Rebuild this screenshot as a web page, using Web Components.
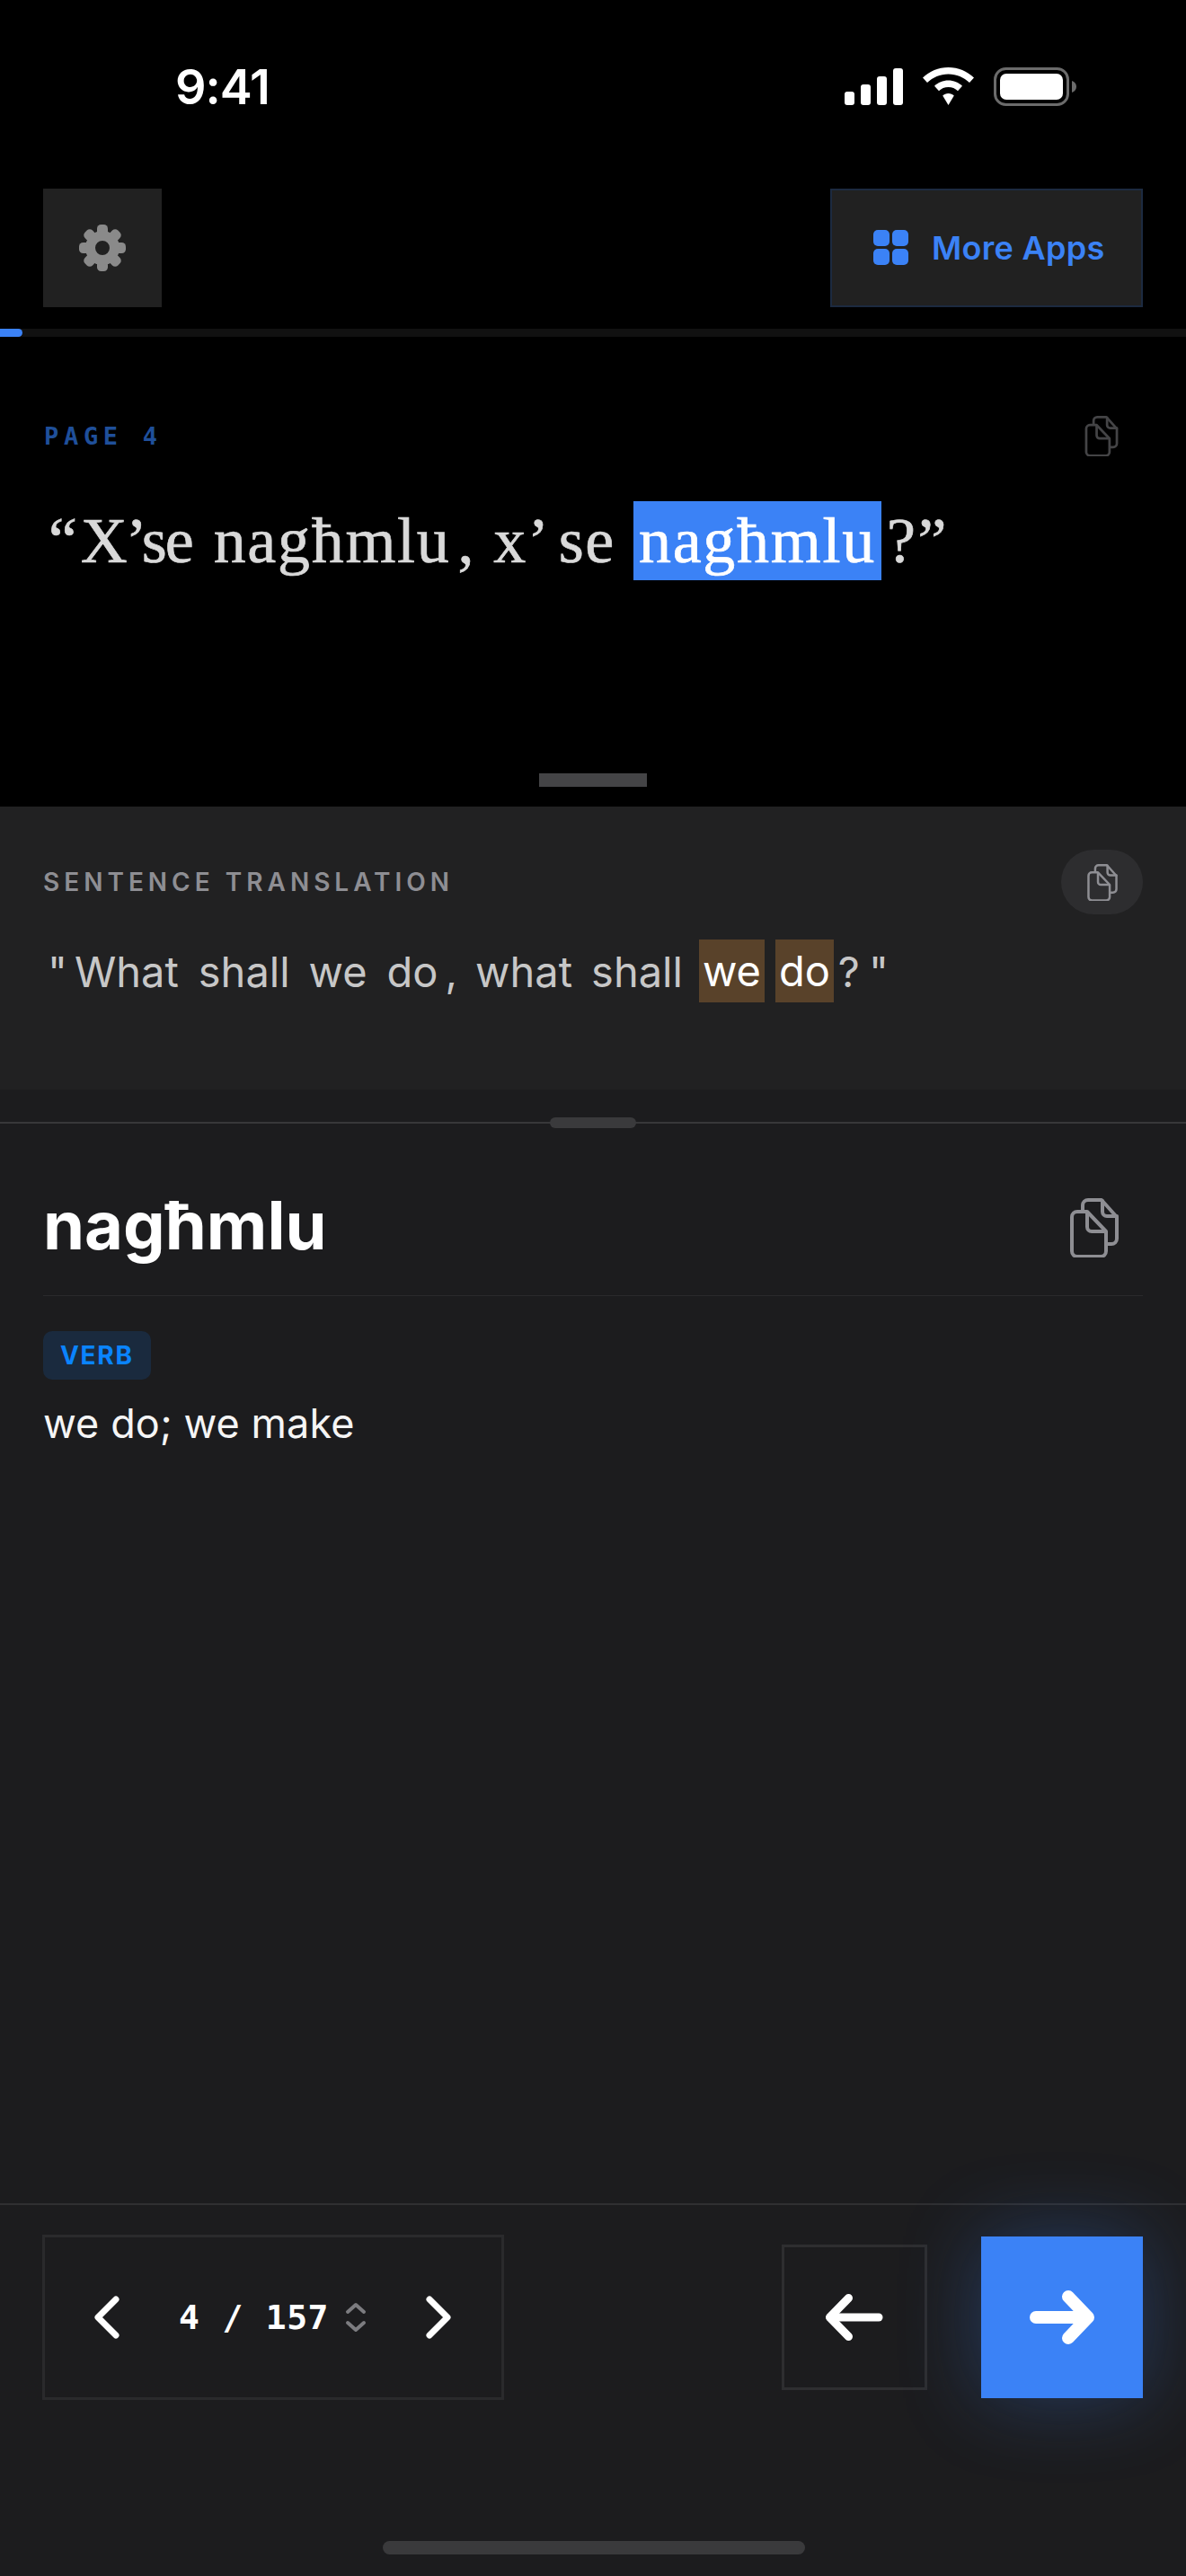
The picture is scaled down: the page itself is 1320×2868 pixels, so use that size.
<!DOCTYPE html>
<html>
<head>
<meta charset="utf-8">
<style>
  html, body { margin: 0; padding: 0; background: #000; }
  body { width: 1320px; height: 2868px; overflow: hidden; font-family: 'Inter', sans-serif; }
  reader-app { height: 2868px; }
</style>
</head>
<body>
<reader-app></reader-app>
<script>
const copyIcon = `
  <svg viewBox="0 0 54 66" fill="none" stroke="currentColor" stroke-width="4" stroke-linejoin="round" stroke-linecap="round" style="display:block;width:100%;height:100%">
    <path d="M14 14 V8 a6 6 0 0 1 6 -6 h15 l17 19 v24 a6 6 0 0 1 -6 6 h-5"/>
    <path d="M36 3 v12 a5 5 0 0 0 5 5 h11"/>
    <path d="M8 15 h11 l21 22 v22 a6 6 0 0 1 -6 6 H8 a6 6 0 0 1 -6 -6 V21 a6 6 0 0 1 6 -6 z"/>
    <path d="M19 16 v16 a5 5 0 0 0 5 5 h15"/>
  </svg>`;

const gearTeeth = [0, 45, 90, 135, 180, 225, 270, 315]
  .map(a => `<rect x="-6" y="-26" width="12" height="12" rx="4.500" transform="rotate(${a})"/>`)
  .join('');

class StatusBar extends HTMLElement {
  constructor() {
    super();
    this.attachShadow({ mode: 'open' });
    this.shadowRoot.innerHTML = `
      <style>
        :host { display: flex; justify-content: space-between; align-items: center; height: 192px; padding: 0 122px 0 195px; box-sizing: border-box; background: #000; color: #fff; }
        .time { font: 600 54px 'Inter', sans-serif; letter-spacing: -1px; }
        .icons { display: flex; align-items: center; gap: 22px; }
        svg { display: block; }
      </style>
      <div class="time">9:41</div>
      <div class="icons">
        <svg width="65" height="41" viewBox="0 0 65 41" fill="#fff">
          <rect x="0" y="26" width="11" height="15" rx="3"/>
          <rect x="18" y="18" width="11" height="23" rx="3"/>
          <rect x="36" y="9" width="11" height="32" rx="3"/>
          <rect x="54" y="0" width="11" height="41" rx="3"/>
        </svg>
        <svg width="57" height="42" viewBox="0 0 57 42" fill="#fff">
          <path d="M28.500 0 C39.500 0 49.500 4.300 57 11.500 L52 17 C45.800 11.100 37.500 7.500 28.500 7.500 C19.500 7.500 11.200 11.100 5 17 L0 11.500 C7.500 4.300 17.500 0 28.500 0 Z"/>
          <path d="M28.500 14.500 C34.500 14.500 40 16.900 44 20.700 L39 26.200 C36.300 23.600 32.600 22 28.500 22 C24.400 22 20.700 23.600 18 26.200 L13 20.700 C17 16.900 22.500 14.500 28.500 14.500 Z"/>
          <path d="M28.500 29 C31 29 33.200 30 34.800 31.500 L28.500 42 L22.200 31.500 C23.800 30 26 29 28.500 29 Z"/>
        </svg>
        <svg width="92" height="43" viewBox="0 0 92 43">
          <rect x="1.500" y="1.500" width="81" height="40" rx="12" fill="none" stroke="#6b6b6b" stroke-width="3"/>
          <rect x="7" y="7" width="70" height="29" rx="7" fill="#fff"/>
          <path d="M87 15 c3 1 5 3.500 5 6.500 s-2 5.500 -5 6.500 z" fill="#6b6b6b"/>
        </svg>
      </div>`;
  }
}

class TopBar extends HTMLElement {
  constructor() {
    super();
    this.attachShadow({ mode: 'open' });
    this.shadowRoot.innerHTML = `
      <style>
        :host { display: flex; justify-content: space-between; padding: 18px 48px 0; height: 174px; box-sizing: border-box; background: #000; }
        .btn { display: flex; align-items: center; justify-content: center; height: 132px; box-sizing: border-box; background: #212121; }
        .gear { width: 132px; }
        .more { width: 348px; gap: 25px; justify-content: flex-start; padding-left: 46px; border: 2px solid #1c2a40; color: #3b82f6; font: 600 36px 'Inter', sans-serif; letter-spacing: 0.300px; }
        svg { display: block; }
      </style>
      <div class="btn gear">
        <svg width="52" height="52" viewBox="-26 -26 52 52" fill="#8a8a8a">
          ${gearTeeth}
          <circle r="13.500" fill="none" stroke="#8a8a8a" stroke-width="11"/>
        </svg>
      </div>
      <div class="btn more">
        <svg width="40" height="40" viewBox="0 0 40 40" fill="#3b82f6">
          <rect x="0" y="0" width="18" height="18" rx="5"/>
          <rect x="21" y="0" width="18" height="18" rx="5"/>
          <rect x="0" y="21" width="18" height="18" rx="5"/>
          <rect x="21" y="21" width="18" height="18" rx="5"/>
        </svg>
        <span>More Apps</span>
      </div>`;
  }
}

class ProgressBar extends HTMLElement {
  constructor() {
    super();
    this.attachShadow({ mode: 'open' });
    this.shadowRoot.innerHTML = `
      <style>
        :host { display: block; height: 9px; background: #111; }
        div { width: 25px; height: 100%; background: #3b82f6; border-radius: 0 5px 5px 0; }
      </style>
      <div></div>`;
  }
}

class SentencePanel extends HTMLElement {
  constructor() {
    super();
    this.attachShadow({ mode: 'open' });
    this.shadowRoot.innerHTML = `
      <style>
        :host { display: flex; flex-direction: column; height: 523px; padding: 0 48px; box-sizing: border-box; background: #000; position: relative; }
        .head { display: flex; justify-content: space-between; align-items: center; height: 66px; margin-top: 77px; }
        .label { font: 700 27px 'DejaVu Sans Mono', monospace; color: #1f4f9a; letter-spacing: 5.700px; white-space: pre; margin-left: 1px; }
        .copy { width: 38px; height: 45px; color: #444446; margin-right: 27px; }
        .line { display: flex; align-items: center; height: 88px; margin-top: 40px; font: 400 72px/88px 'Liberation Serif', serif; letter-spacing: 1.700px; color: #d9d9d9; -webkit-text-stroke: 0.7px currentColor; }
        .hl { background: #3b82f6; color: #fff; height: 88px; padding: 0 6px; }
        span { display: block; white-space: pre; }
        .handle { position: absolute; left: 600px; bottom: 22px; width: 120px; height: 15px; background: #444446; }
      </style>
      <div class="head"><span class="label">PAGE 4</span><div class="copy">${copyIcon}</div></div>
      <div class="line">
        <span style="margin-left:6px">“</span><span style="margin-left:2px;letter-spacing:-2px">X’se</span><span style="margin-left:24px">nagħmlu</span><span style="margin-left:8px">,</span><span style="margin-left:20px">x’</span><span style="margin-left:9px">se</span><span style="margin-left:20px" class="hl">nagħmlu</span><span style="margin-left:6px">?</span><span style="margin-left:1px">”</span>
      </div>
      <div class="handle"></div>`;
  }
}

class TranslationPanel extends HTMLElement {
  constructor() {
    super();
    this.attachShadow({ mode: 'open' });
    this.shadowRoot.innerHTML = `
      <style>
        :host { display: block; height: 315px; padding: 48px 48px 0; box-sizing: border-box; background: #212122; }
        .head { display: flex; justify-content: space-between; align-items: center; height: 72px; }
        .label { font: 600 28px 'Inter', sans-serif; color: #8e8e93; letter-spacing: 5px; }
        .copy { width: 91px; height: 72px; border-radius: 36px; background: #2d2d2f; color: #8e8e93; display: flex; align-items: center; justify-content: center; }
        .copy div { width: 34px; height: 41px; }
        .line { display: flex; align-items: center; height: 70px; margin-top: 28px; font: 400 47px 'Inter', sans-serif; color: #c7c7c7; }
        span { display: block; white-space: pre; }
        .hl { background: #59422a; color: #fff; height: 70px; line-height: 70px; padding: 0 4px; }
      </style>
      <div class="head"><span class="label">SENTENCE TRANSLATION</span><div class="copy"><div>${copyIcon}</div></div></div>
      <div class="line">
        <span style="margin-left:5px">"</span><span style="margin-left:8px">What</span><span style="margin-left:22px">shall</span><span style="margin-left:21px">we</span><span style="margin-left:22px">do</span><span style="margin-left:8px">,</span><span style="margin-left:20px">what</span><span style="margin-left:21px">shall</span><span style="margin-left:18px" class="hl">we</span><span style="margin-left:12px" class="hl">do</span><span style="margin-left:5px">?</span><span style="margin-left:10px">"</span>
      </div>`;
  }
}

class DictPanel extends HTMLElement {
  constructor() {
    super();
    this.attachShadow({ mode: 'open' });
    this.shadowRoot.innerHTML = `
      <style>
        :host { display: block; height: 1240px; background: #1c1c1e; position: relative; box-sizing: border-box; }
        .rule { position: absolute; left: 0; right: 0; top: 36px; height: 2px; background: #38383a; }
        .grip { position: absolute; left: 612px; top: 31px; width: 96px; height: 12px; border-radius: 6px; background: #3a3a3c; }
        .word { display: flex; justify-content: space-between; align-items: center; margin: 0 48px; padding-top: 72px; height: 230px; box-sizing: border-box; border-bottom: 1px solid #2a2a2c; }
        .word b { font: 700 74px 'Inter', sans-serif; color: #fff; }
        .copy { width: 54px; height: 66px; color: #8e8e93; margin: 6px 27px 0 0; }
        .badge { display: inline-block; margin: 39px 0 0 48px; padding: 0 19px; height: 54px; background: #1a2a3e; border-radius: 10px; color: #0a84ff; font: 700 28px/54px 'Inter', sans-serif; letter-spacing: 1.700px; }
        .def { margin: 21px 0 0 48px; font: 400 45px 'Inter', sans-serif; letter-spacing: 0.100px; color: #f5f5f5; }
      </style>
      <div class="rule"></div>
      <div class="grip"></div>
      <div class="word"><b>nagħmlu</b><div class="copy">${copyIcon}</div></div>
      <div class="badge">VERB</div>
      <div class="def">we do; we make</div>`;
  }
}

class PagerBar extends HTMLElement {
  constructor() {
    super();
    this.attachShadow({ mode: 'open' });
    this.shadowRoot.innerHTML = `
      <style>
        :host { display: block; height: 415px; padding: 33px 48px 0 47px; box-sizing: border-box; background: #1c1c1e; border-top: 2px solid #2f2f31; position: relative; }
        .row { display: flex; align-items: center; }
        .pager { display: flex; align-items: center; width: 514px; height: 184px; box-sizing: border-box; border: 3px solid #2a2a2c; color: #fff; padding: 0 55px 0 55px; }
        .count { display: flex; align-items: center; font: 700 38px 'DejaVu Sans Mono', monospace; letter-spacing: 0.500px; white-space: pre; margin-left: 64px; }
        .slash { margin: 0 25px; }
        .updown { margin-left: 18px; }
        .next { margin-left: auto; }
        .back { margin-left: auto; width: 162px; height: 162px; border: 3px solid #2e2e30; box-sizing: border-box; display: flex; align-items: center; justify-content: center; }
        .go { margin-left: 60px; width: 180px; height: 180px; background: #3b82f6; display: flex; align-items: center; justify-content: center; box-shadow: 0 0 90px rgba(59,130,246,.3); }
        svg { display: block; }
        .home { position: absolute; left: 426px; top: 374px; width: 470px; height: 15px; border-radius: 8px; background: #3a3a3c; }
      </style>
      <div class="row">
        <div class="pager">
          <svg width="30" height="48" viewBox="0 0 30 48" fill="none" stroke="#fff" stroke-width="7" stroke-linecap="round" stroke-linejoin="round"><path d="M24 4 L4 24 L24 44"/></svg>
          <div class="count"><span>4</span><span class="slash">/</span><span>157</span>
            <svg class="updown" width="24" height="34" viewBox="0 0 24 34" fill="none" stroke="#7c7c80" stroke-width="4" stroke-linecap="round" stroke-linejoin="round"><path d="M3 11 L12 3 L21 11"/><path d="M3 23 L12 31 L21 23"/></svg>
          </div>
          <svg class="next" width="30" height="48" viewBox="0 0 30 48" fill="none" stroke="#fff" stroke-width="7" stroke-linecap="round" stroke-linejoin="round"><path d="M5 4 L25 24 L5 44"/></svg>
        </div>
        <div class="back">
          <svg width="64" height="52" viewBox="0 0 64 52" fill="none" stroke="#fff" stroke-width="9" stroke-linecap="round" stroke-linejoin="round"><path d="M25.500 4.500 L4.500 26 L25.500 47.500"/><path d="M5 26 H59"/></svg>
        </div>
        <div class="go">
          <svg width="72" height="60" viewBox="0 0 72 60" fill="none" stroke="#fff" stroke-width="14" stroke-linecap="round" stroke-linejoin="round"><path d="M43 7 L65 30 L43 53"/><path d="M7 30 H64"/></svg>
        </div>
      </div>
      <div class="home"></div>`;
  }
}

class ReaderApp extends HTMLElement {
  constructor() {
    super();
    this.attachShadow({ mode: 'open' });
    this.shadowRoot.innerHTML = `
      <style>:host { display: flex; flex-direction: column; }</style>
      <status-bar></status-bar>
      <top-bar></top-bar>
      <progress-bar></progress-bar>
      <sentence-panel></sentence-panel>
      <translation-panel></translation-panel>
      <dict-panel></dict-panel>
      <pager-bar></pager-bar>`;
  }
}

customElements.define('status-bar', StatusBar);
customElements.define('top-bar', TopBar);
customElements.define('progress-bar', ProgressBar);
customElements.define('sentence-panel', SentencePanel);
customElements.define('translation-panel', TranslationPanel);
customElements.define('dict-panel', DictPanel);
customElements.define('pager-bar', PagerBar);
customElements.define('reader-app', ReaderApp);
</script>
</body>
</html>
